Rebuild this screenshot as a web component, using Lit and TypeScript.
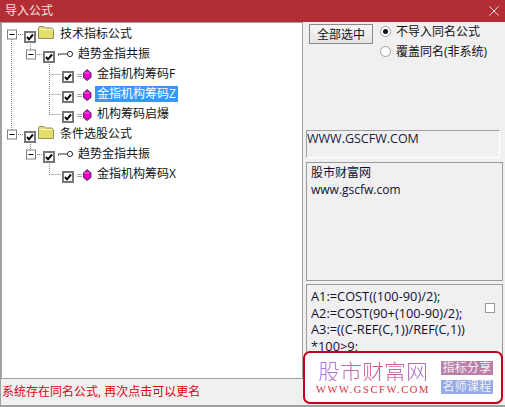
import { LitElement, html, css, svg } from "lit";
import { customElement } from "lit/decorators.js";
import { classMap } from "lit/directives/class-map.js";

type Node = { level: number; icon: "folder" | "key" | "gem"; label: string; selected?: boolean };

const NODES: Node[] = [
  { level: 0, icon: "folder", label: "技术指标公式" },
  { level: 1, icon: "key", label: "趋势金指共振" },
  { level: 2, icon: "gem", label: "金指机构筹码F" },
  { level: 2, icon: "gem", label: "金指机构筹码Z", selected: true },
  { level: 2, icon: "gem", label: "机构筹码启爆" },
  { level: 0, icon: "folder", label: "条件选股公式" },
  { level: 1, icon: "key", label: "趋势金指共振" },
  { level: 2, icon: "gem", label: "金指机构筹码X" },
];

const folder = html`<svg class="ico folder" width="16" height="13" viewBox="0 0 16 13">
  <path d="M0.500 12.500V2l1-1.500h4.500l1.500 1.500h6.500l1.500 1.500v9z" fill="#e4df6c" stroke="#8f8f66" stroke-width="1"/>
  <path d="M1.500 3.500h13" stroke="#fbf8b8" stroke-width="1"/>
</svg>`;

const key = html`<svg class="ico key" width="15" height="8" viewBox="0 0 15 8">
  <circle cx="12" cy="4" r="2.600" fill="#fff" stroke="#333" stroke-width="1"/>
  <path d="M0.500 5.500V4H9" stroke="#333" stroke-width="1" fill="none"/>
</svg>`;

const gem = html`<svg class="ico gem" width="15" height="12" viewBox="0 0 15 12">
  <path d="M0 5.500h5M0 7.500h5" stroke="#a8a8a8" stroke-width="1"/>
  <path d="M6.500 4L10 0.500 14 4v4.500l-4 3-3.500-3z" fill="#e600c4" stroke="#4a2a70" stroke-width="1"/>
  <path d="M7.500 4h5" stroke="#ff70e8" stroke-width="1"/>
</svg>`;

const icons = { folder, key, gem };

const check = html`<svg width="12" height="12" viewBox="0 0 12 12" class="chk">
  <rect x="1" y="1" width="10" height="10" fill="#fff" stroke="#777" stroke-width="2"/>
  <path d="M3 6l2 2.300L9 3.500" fill="none" stroke="#000" stroke-width="2"/>
</svg>`;

@customElement("app-root")
export class AppRoot extends LitElement {
  static styles = css`
    :host {
      display: block;
      position: relative;
      width: 505px;
      height: 407px;
      overflow: hidden;
      background: #f0f0f0;
      font-family: "Open Sans", "Noto Sans CJK SC", sans-serif;
      font-size: 12px;
      color: #111;
    }
    .window { display: flex; flex-direction: column; height: 100%; }
    .title {
      flex: 0 0 22px;
      background: #b22e34;
      color: #f2e4e4;
      display: flex;
      align-items: center;
      justify-content: space-between;
      padding: 0 6px 0 5px;
      line-height: 22px;
    }
    .body { flex: 1; display: flex; min-height: 0; }
    .tree {
      position: relative;
      width: 303px;
      box-sizing: border-box;
      background: #fff;
      border: solid #a0a0a0;
      border-width: 1px 1px 1px 2px;
      padding-top: 1px;
    }
    .lines { position: absolute; left: -2px; top: -23px; pointer-events: none; }
    .row { display: flex; align-items: center; height: 20px; position: relative; }
    .l0 { padding-left: 22px; }
    .l1 { padding-left: 41px; }
    .l2 { padding-left: 60px; }
    .chk { margin-top: 6px; flex: none; }
    .ico { margin-left: 2px; flex: none; }
    .folder { margin-top: -3px; }
    .key { margin-left: 3px; }
    .gem { margin-left: 3px; margin-top: 2px; }
    .label { margin-left: 5px; padding: 0 2px; line-height: 16px; white-space: nowrap; }
    .l0 .label { margin-left: 4px; }
    .l1 .label { margin-left: 3px; }
    .l2 .label { margin-left: 3px; }
    .label.sel { background: #3399ff; color: #fff; }
    .side {
      flex: 1;
      display: flex;
      flex-direction: column;
      padding: 2px 2px 0 3px;
      min-width: 0;
    }
    .top { flex: 0 0 106px; display: flex; align-items: flex-start; padding-left: 3px; gap: 7px; }
    button {
      width: 64px;
      height: 20px;
      padding: 0;
      font: inherit;
      color: #111;
      background: linear-gradient(#f6f6f6, #e4e4e4);
      border: 1px solid #8a8a8a;
    }
    .radios { display: flex; flex-direction: column; gap: 4px; margin-top: -1px; }
    .radio { display: flex; align-items: center; height: 16px; gap: 5px; white-space: nowrap; }
    .dot {
      width: 9px; height: 9px;
      border-radius: 50%;
      background: #fff;
      border: 1px solid #a0a0a0;
      display: flex; align-items: center; justify-content: center;
      flex: none;
    }
    .dot i { width: 5px; height: 5px; border-radius: 50%; background: #111; }
    .url {
      flex: 0 0 28px;
      box-sizing: border-box;
      margin-right: 3px;
      border: solid;
      border-width: 1px;
      border-color: #a0a0a0 #fff #fff #a0a0a0;
      font-size: 12.500px;
      line-height: 16px;
      color: #1a1a40;
    }
    .box {
      box-sizing: border-box;
      border: 1px solid #9a9a9a;
      background: #f0f0f0;
      padding: 1px 4px;
      overflow: hidden;
      color: #101030;
      font-size: 12px;
      line-height: 17px;
    }
    .desc { flex: 0 0 119px; margin-top: 4px; }
    .code { flex: 1; margin-top: 3px; position: relative; padding-top: 3px; font-size: 12.800px; line-height: 16.700px; }
    .cb { position: absolute; right: 7px; top: 18px; width: 8px; height: 8px; background: #fff; border: 1px solid #999; }
    .status {
      flex: 0 0 28px;
      box-sizing: border-box;
      color: #e00010;
      padding-left: 1px;
      line-height: 25px;
      border-left: 1px solid #a0a0a0;
      border-bottom: 2px solid #a0a0a0;
    }
    .badge {
      position: absolute;
      left: 303px;
      top: 351px;
      width: 200px;
      height: 53px;
      box-sizing: border-box;
      background: #fff;
      border: 2px solid #c4001a;
      border-radius: 7px;
      display: flex;
      padding: 8px 8px 0 10px;
      justify-content: space-between;
    }
    .brand { display: flex; flex-direction: column; align-items: center; width: 116px; margin-top: -2px; }
    .cn {
      font-family: "Noto Sans CJK SC", sans-serif;
      font-weight: 300;
      font-size: 22px;
      line-height: 22px;
      background: linear-gradient(90deg, #a878e8, #e05880 55%, #9878e0);
      -webkit-background-clip: text;
      background-clip: text;
      color: transparent;
    }
    .en {
      font-family: "Liberation Serif", serif;
      font-size: 10.500px;
      letter-spacing: 1.600px;
      color: #d8303c;
      line-height: 14px;
      margin-top: 2px;
      white-space: nowrap;
    }
    .tags { display: flex; flex-direction: column; gap: 5px; }
    .tag {
      width: 52px; height: 14px;
      font-size: 12px; line-height: 14px;
      text-align: center;
      letter-spacing: 0.300px;
      color: #f4f0f4;
      white-space: nowrap;
    }
    .t1 { background: #b97fa8; }
    .t2 { background: #95aae8; }
  `;

  private lines() {
    const box = (x: number, y: number) => svg`
      <rect x="${x - 4.5}" y="${y - 4.5}" width="9" height="9" fill="#fff" stroke="#808080"/>
      <path d="M${x - 2.5} ${y}h5" stroke="#000"/>`;
    const dotted = "M11.500 39V130 M16 34.500H23 M16 134.500H23 M30.500 44V50 M35 54.500H43 M49.500 62V114.500 M49.500 74.500H61 M49.500 94.500H61 M49.500 114.500H61 M30.500 144V150 M35 154.500H43 M49.500 162V174.500 M49.500 174.500H61";
    return svg`<svg class="lines" width="100" height="200" viewBox="0 0 100 200">
      <path d="${dotted}" stroke="#808080" stroke-dasharray="1 1" fill="none"/>
      ${box(12, 34.5)}${box(12, 134.5)}${box(31, 54.5)}${box(31, 154.5)}
    </svg>`;
  }

  render() {
    return html`
      <div class="window">
        <div class="title">
          <span>导入公式</span>
          <svg width="10" height="10" viewBox="0 0 10 10"><path d="M0.500 0.500l9 9M9.500 0.500l-9 9" stroke="#f0d8d8" fill="none"/></svg>
        </div>
        <div class="body">
          <div class="tree">
            ${this.lines()}
            ${NODES.map(
              (n) => html`<div class="row l${n.level}">
                ${check}${icons[n.icon]}
                <span class=${classMap({ label: true, sel: !!n.selected })}>${n.label}</span>
              </div>`
            )}
          </div>
          <div class="side">
            <div class="top">
              <button>全部选中</button>
              <div class="radios">
                <label class="radio"><span class="dot"><i></i></span>不导入同名公式</label>
                <label class="radio"><span class="dot"></span>覆盖同名(非系统)</label>
              </div>
            </div>
            <div class="url">WWW.GSCFW.COM</div>
            <div class="box desc">股市财富网<br />www.gscfw.com</div>
            <div class="box code">
              A1:=COST((100-90)/2);<br />A2:=COST(90+(100-90)/2);<br />A3:=((C-REF(C,1))/REF(C,1))<br />*100&gt;9;
              <span class="cb"></span>
            </div>
          </div>
        </div>
        <div class="status">系统存在同名公式, 再次点击可以更名</div>
      </div>
      <div class="badge">
        <div class="brand">
          <div class="cn">股市财富网</div>
          <div class="en">WWW.GSCFW.COM</div>
        </div>
        <div class="tags">
          <div class="tag t1">指标分享</div>
          <div class="tag t2">名师课程</div>
        </div>
      </div>
    `;
  }
}
